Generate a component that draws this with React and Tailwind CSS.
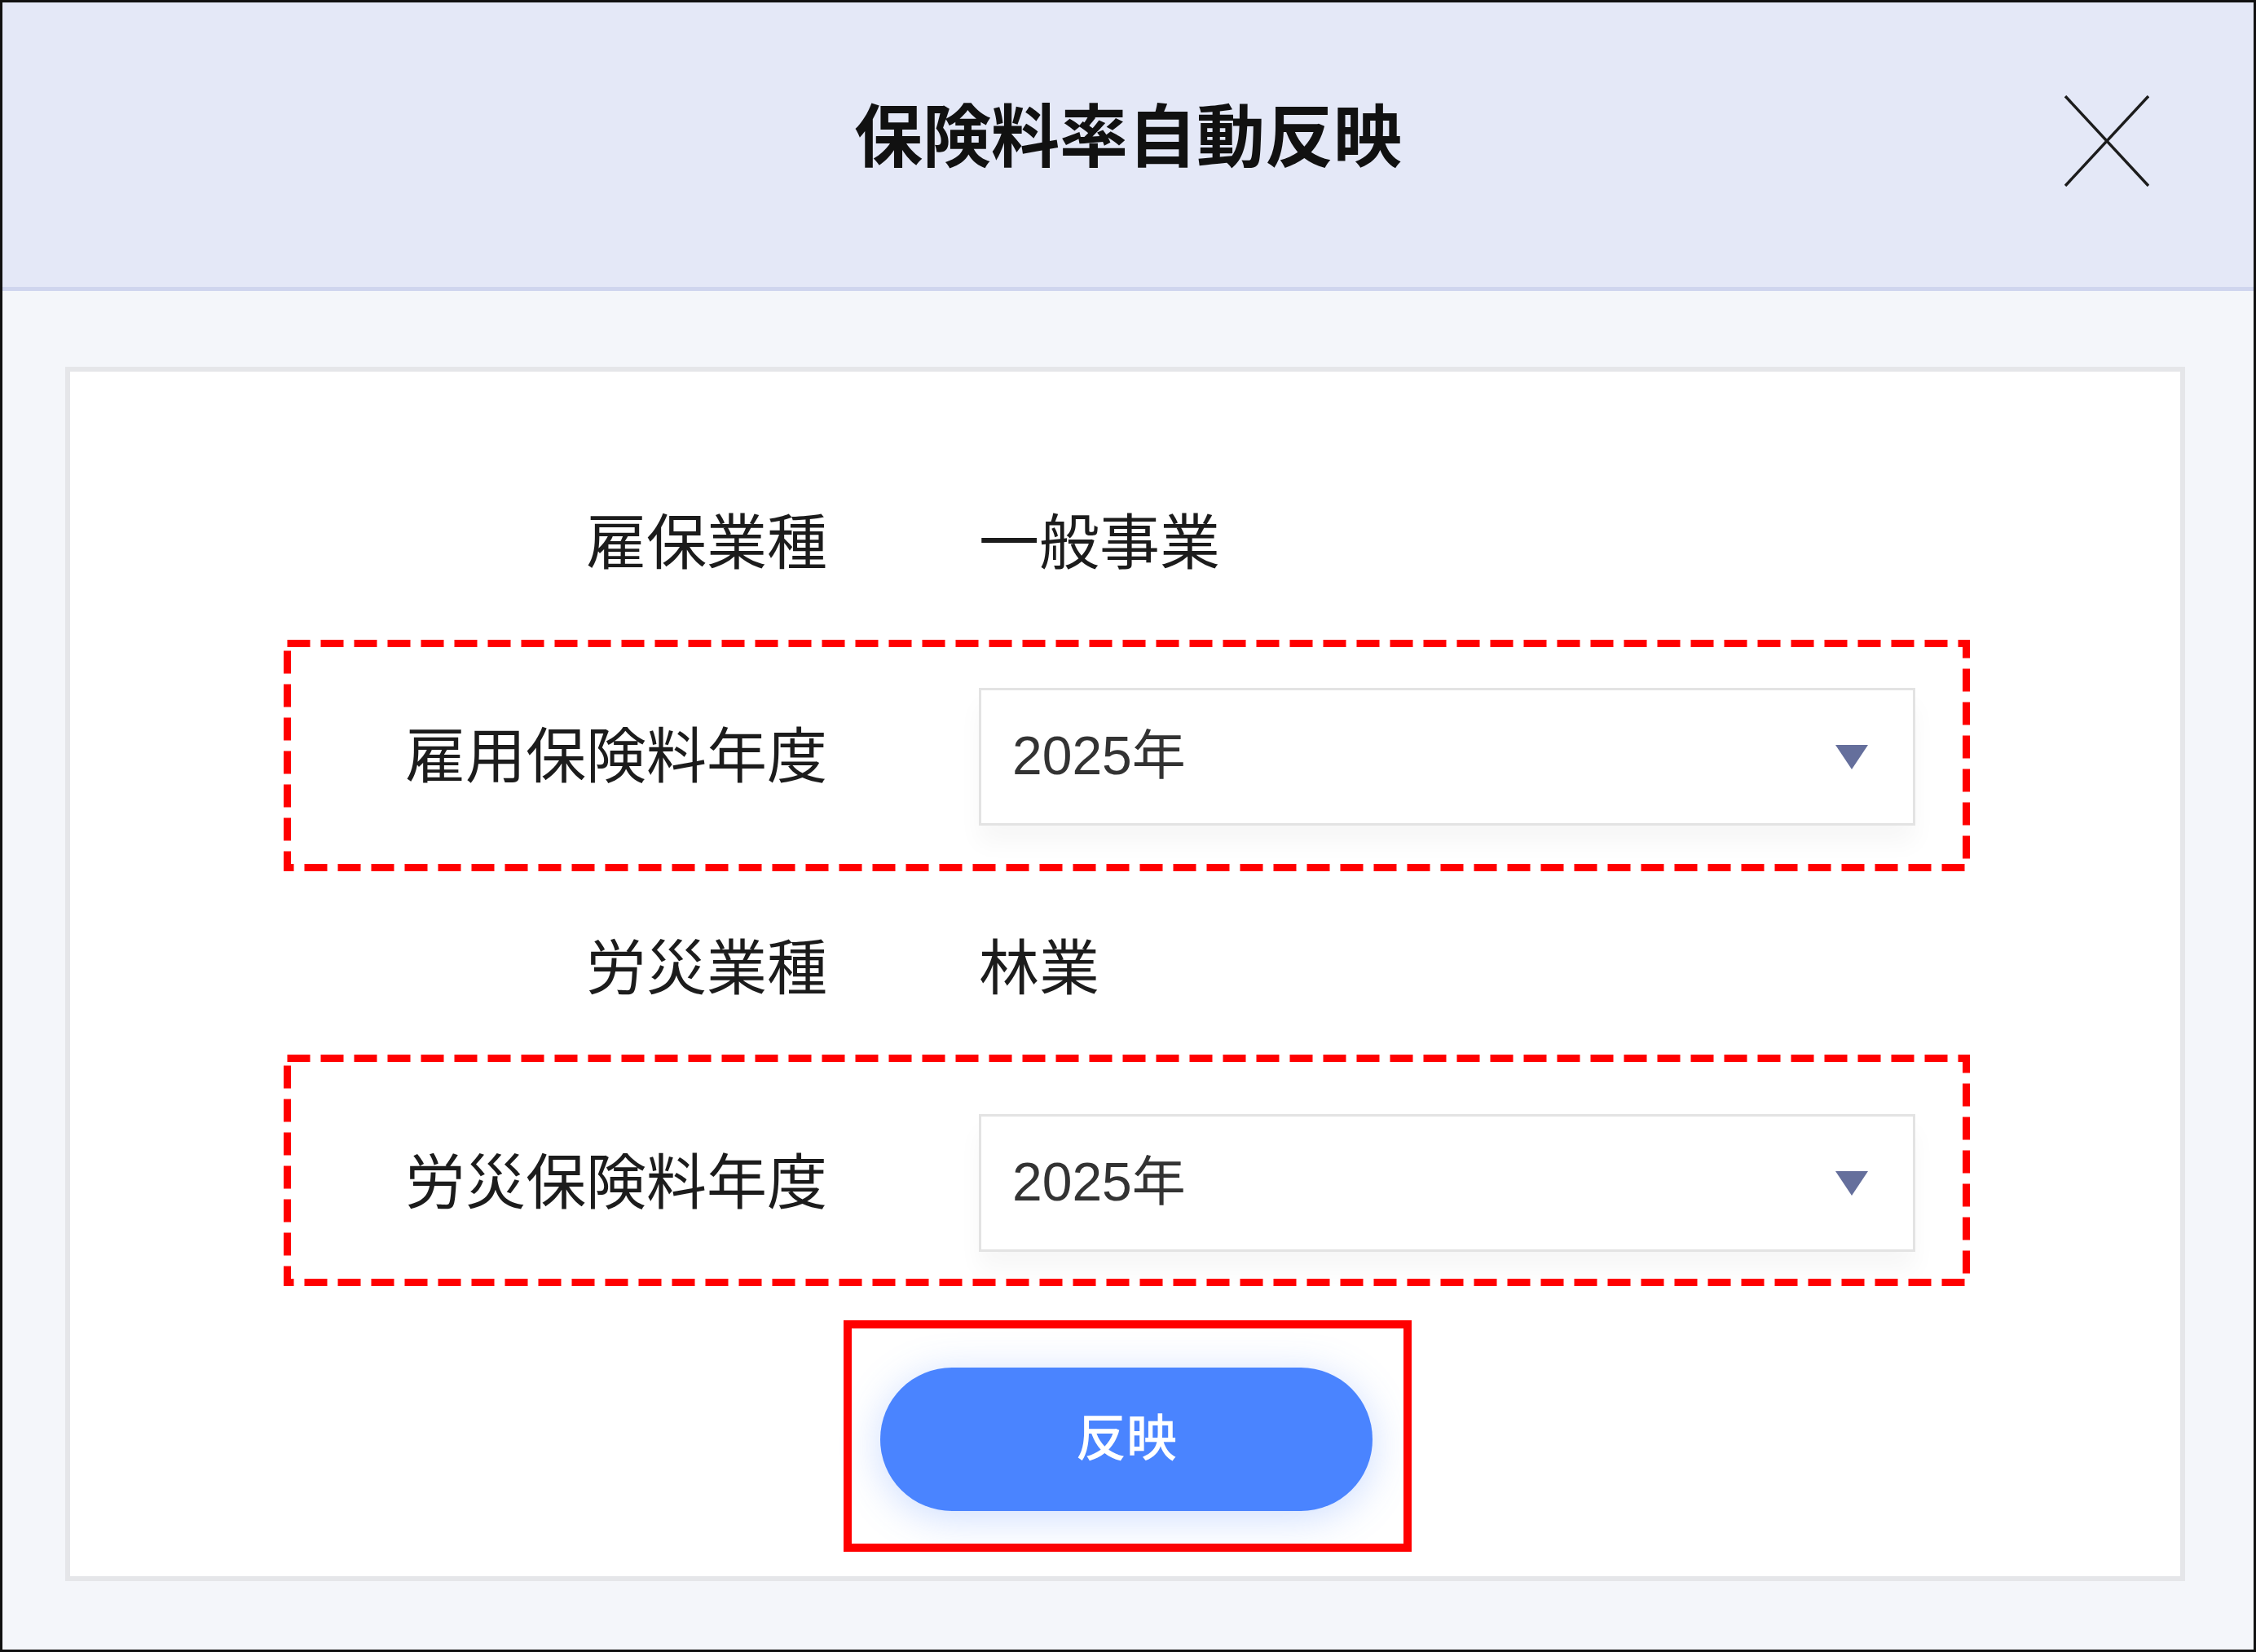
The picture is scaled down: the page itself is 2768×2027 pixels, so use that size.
import { useState } from "react";

const FONT = { fontFamily: '"Liberation Sans", "Noto Sans CJK JP", sans-serif' };

function CloseIcon() {
  return (
    <svg width="104" height="112" viewBox="0 0 104 112" fill="none">
      <line x1="1" y1="1" x2="103" y2="111" stroke="#1c1c1c" strokeWidth="3.5" />
      <line x1="103" y1="1" x2="1" y2="111" stroke="#1c1c1c" strokeWidth="3.5" />
    </svg>
  );
}

// red dashed annotation frame drawn over the row
function DashedFrame() {
  return (
    <svg className="pointer-events-none absolute left-[-9px] top-[-9px]" width="2069" height="284" viewBox="0 0 2069 284" fill="none">
      <rect x="4.5" y="4.5" width="2060" height="275" stroke="#ff0000" strokeWidth="9" strokeDasharray="28 13" />
    </svg>
  );
}

function YearSelect({ value }) {
  return (
    <div className="flex h-[169px] w-[1149px] items-center justify-between border-[3px] border-[#e3e3e3] bg-white pl-[38px] pr-[55px] shadow-[0_22px_28px_rgba(0,0,0,0.035)]">
      <span className="pb-[4px] text-[66px] leading-none text-[#333]">{value}</span>
      <svg width="40" height="30" viewBox="0 0 40 30">
        <polygon points="0,0 40,0 20,30" fill="#656f9c" />
      </svg>
    </div>
  );
}

function Row({ label, children, className, dashed }) {
  return (
    <div className={`relative flex items-center border-[9px] border-transparent ${className}`}>
      {dashed && <DashedFrame />}
      <div className="w-[658px] shrink-0 text-right text-[74px] leading-none text-[#1c1c1c]">{label}</div>
      <div className="ml-[186px] text-[74px] leading-none text-[#1c1c1c]">{children}</div>
    </div>
  );
}

export default function App() {
  const [year1] = useState("2025年");
  const [year2] = useState("2025年");

  return (
    <div style={FONT} className="flex h-[2027px] w-[2768px] flex-col border-[3px] border-[#111]">
      <div className="grid h-[354px] shrink-0 grid-cols-[1fr_auto_1fr] items-center border-b-[5px] border-[#cfd5ee] bg-[#e4e8f7] pb-[18px]">
        <div />
        <div className="text-[84px] font-bold leading-none text-[#111]">保険料率自動反映</div>
        <div className="flex justify-end pr-[128px] pt-[8px]">
          <CloseIcon />
        </div>
      </div>

      <div className="flex flex-1 flex-col bg-[#f4f6fa] pb-[84px] pl-[77px] pr-[84px] pt-[93px]">
        <div className="flex-1 border-[6px] border-[#e5e6e9] bg-white pt-[79px]">
          <div className="ml-[262px] w-[2069px]">
            <Row label="雇保業種" className="h-[250px] pt-[14px]">一般事業</Row>

            <Row label="雇用保険料年度" dashed className="h-[284px] pb-[47px] pt-[50px]">
              <YearSelect value={year1} />
            </Row>

            <Row label="労災業種" className="h-[225px] pt-[14px]">林業</Row>

            <Row label="労災保険料年度" dashed className="h-[284px] pb-[33px] pt-[64px]">
              <YearSelect value={year2} />
            </Row>

            <div className="ml-[687px] mt-[42px] h-[284px] w-[697px] border-[10px] border-[#ff0000] pl-[35px] pt-[48px]">
              <button className="flex h-[176px] w-[604px] items-center justify-center rounded-full bg-[#4a84ff] text-[62px] font-medium leading-none text-white shadow-[0_8px_50px_rgba(74,132,255,0.28)]">
                反映
              </button>
            </div>
          </div>
        </div>
      </div>
    </div>
  );
}
